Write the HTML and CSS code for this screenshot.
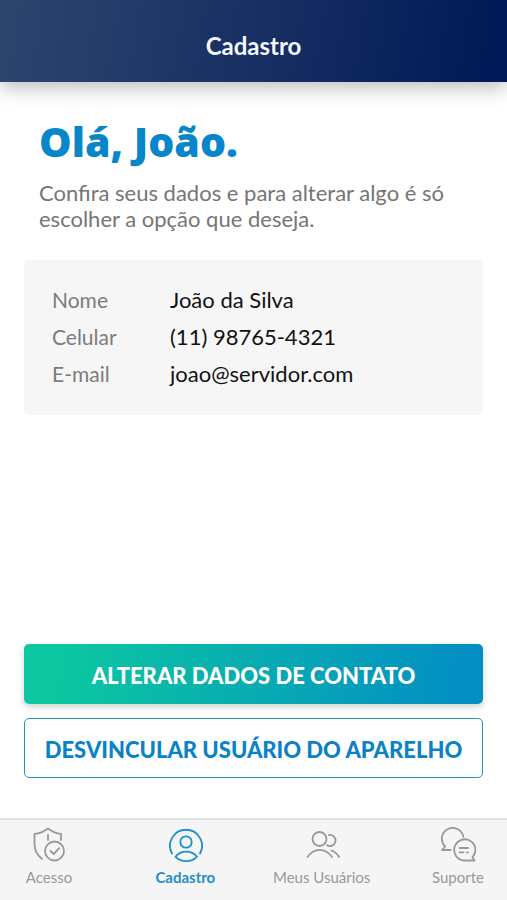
FILE: index.html
```html
<!DOCTYPE html>
<html lang="pt-BR">
<head>
<meta charset="utf-8">
<meta name="viewport" content="width=device-width, initial-scale=1">
<title>Cadastro</title>
<link rel="stylesheet" href="styles.css">
</head>
<body>
<header class="topbar">
  <h1 class="topbar-title">Cadastro</h1>
</header>
<main class="content">
  <section class="intro">
    <h2 class="greeting">Olá, João.</h2>
    <p class="lead">Confira seus dados e para alterar algo é só escolher a opção que deseja.</p>
  </section>
  <dl class="card">
    <dt>Nome</dt><dd>João da Silva</dd>
    <dt>Celular</dt><dd>(11) 98765-4321</dd>
    <dt>E-mail</dt><dd>joao@servidor.com</dd>
  </dl>
  <div class="actions">
    <button type="button" class="btn btn-primary">ALTERAR DADOS DE CONTATO</button>
    <button type="button" class="btn btn-outline">DESVINCULAR USUÁRIO DO APARELHO</button>
  </div>
</main>
<nav class="tabs">
  <a class="tab" href="#acesso">
    <svg class="icon" viewBox="0 0 36 36" aria-hidden="true">
      <path d="M11 32C6 28 3.500 23 3.500 17V6.800C9 6.500 13 4.500 17 1.500C21 4.500 25 6.500 30 6.800V13"/>
      <path d="M17 8v5"/>
      <circle cx="23.500" cy="24" r="9.500"/>
      <path d="M19.500 24l3.200 3.200 5.500-6"/>
    </svg>
    <span>Acesso</span>
  </a>
  <a class="tab tab-active" href="#cadastro" aria-current="page">
    <svg class="icon" viewBox="0 0 36 36" aria-hidden="true">
      <path d="M5 26.500A16 16 0 1 1 33 26.500"/>
      <circle cx="19" cy="15" r="5.700"/>
      <path d="M8.500 29.800C14 23 24.500 23 30 29.800C24 35.500 14.500 35.500 8.500 29.800Z"/>
    </svg>
    <span>Cadastro</span>
  </a>
  <a class="tab" href="#usuarios">
    <svg class="icon" viewBox="0 0 36 36" aria-hidden="true">
      <circle cx="15.500" cy="12" r="7"/>
      <path d="M25 8A5.600 5.600 0 1 1 23 18.300"/>
      <path d="M3.500 30C10 20.500 21.500 20.500 28 30"/>
      <path d="M27.500 23.500C30.500 24.500 33 26.500 35 30"/>
    </svg>
    <span>Meus Usuários</span>
  </a>
  <a class="tab" href="#suporte">
    <svg class="icon" viewBox="0 0 36 36" aria-hidden="true">
      <path d="M10.500 23H2L5.200 19.500A10.800 10.800 0 1 1 23.300 9.800"/>
      <path d="M32.500 30.200A10.600 10.600 0 1 0 24 33.500H34.500Z"/>
      <path d="M19.500 21h8.500M19.500 25.300h4M27 25.300h1"/>
    </svg>
    <span>Suporte</span>
  </a>
</nav>
</body>
</html>
```
FILE: styles.css
```css
* {
  box-sizing: border-box;
}

body {
  margin: 0;
  min-height: 100vh;
  display: flex;
  flex-direction: column;
  background: #fff;
  color: #111;
  font-family: Lato, "Noto Sans", sans-serif;
}

h1, h2, p, dl, dd {
  margin: 0;
}

.topbar {
  padding: 32px 24px 22px;
  text-align: center;
  color: #f4f7ff;
  background: linear-gradient(100deg, #2d466e 0%, #132b60 60%, #001a57 96%);
  box-shadow: 0 6px 18px rgba(0, 0, 0, 0.26);
}

.topbar-title {
  font-size: 24px;
  line-height: 28px;
  font-weight: 700;
}

.content {
  flex: 1;
  display: flex;
  flex-direction: column;
  padding: 32px 24px 40px;
}

.intro {
  padding: 0 15px;
}

.greeting {
  font-family: "Open Sans", "Noto Sans", sans-serif;
  font-size: 41px;
  line-height: 54px;
  font-weight: 800;
  color: #0786ca;
}

.lead {
  margin-top: 12px;
  font-size: 22px;
  line-height: 26px;
  color: #757575;
}

.card {
  margin-top: 28px;
  padding: 21px 28px 23px;
  display: grid;
  grid-template-columns: 118px 1fr;
  border-radius: 5px;
  background: #f6f6f6;
  font-size: 22px;
  line-height: 37px;
}

.card dt {
  font-size: 21px;
  color: #7c7c7c;
}

.actions {
  margin-top: auto;
  display: flex;
  flex-direction: column;
  gap: 14px;
}

.btn {
  padding: 18px 8px 14px;
  border: 0;
  border-radius: 5px;
  font: 900 22px/28px Lato, "Noto Sans", sans-serif;
  cursor: pointer;
}

.btn-primary {
  color: #fff;
  background: linear-gradient(100deg, #0cc7a0 8%, #038fc4 95%);
  box-shadow: 0 3px 6px rgba(0, 0, 0, 0.18);
}

.btn-outline {
  padding: 17px 8px 13px;
  border: 1px solid #2b8fc8;
  color: #0b82c6;
  background: #fff;
}

.tabs {
  display: flex;
  justify-content: space-between;
  padding: 7px 0 13px;
  border-top: 2px solid #e2e2e2;
  background: #f5f5f5;
}

.tab {
  width: 98px;
  display: flex;
  flex-direction: column;
  align-items: center;
  gap: 4px;
  font-size: 15px;
  line-height: 20px;
  white-space: nowrap;
  color: #999;
  text-decoration: none;
}

.tab-active {
  color: #1d8fcb;
  font-weight: 700;
}

.icon {
  width: 36px;
  height: 36px;
  fill: none;
  stroke: currentColor;
  stroke-width: 1.800;
  stroke-linecap: round;
  stroke-linejoin: round;
}
```
